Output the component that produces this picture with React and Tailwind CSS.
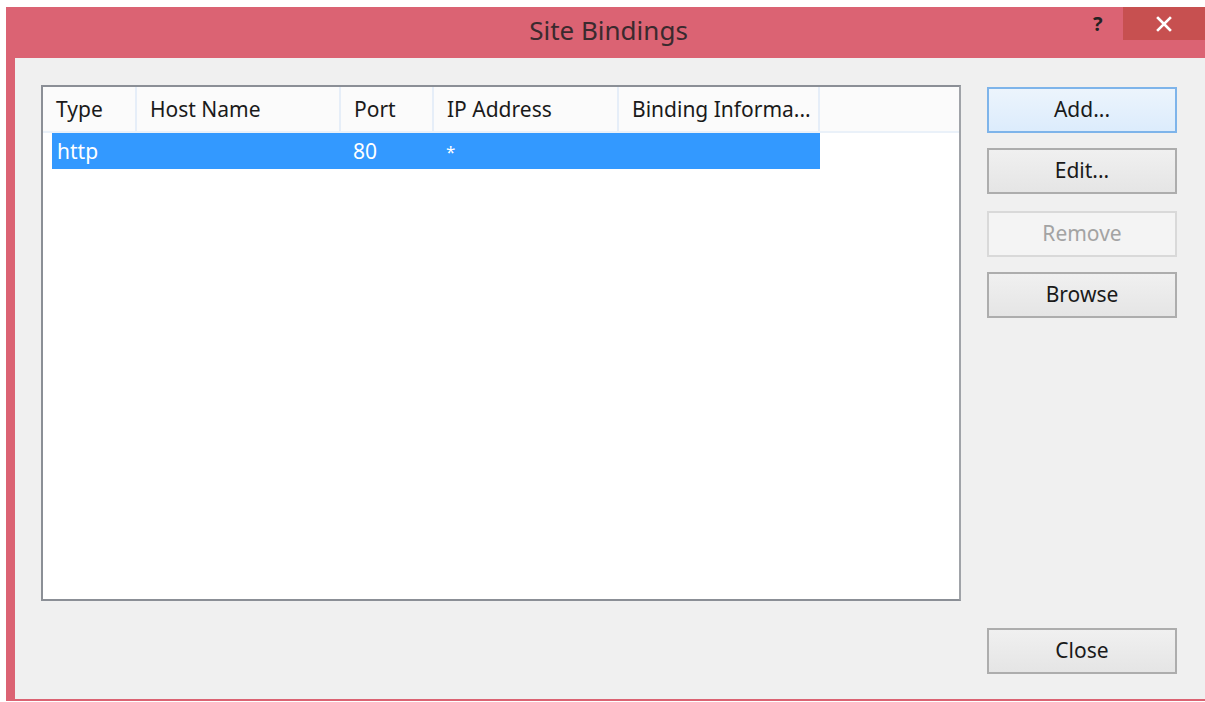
import React from "react";

const font = { fontFamily: '"Noto Sans", "Open Sans", sans-serif' };

const columns = [
  { label: "Type", w: "w-[94px]" },
  { label: "Host Name", w: "w-[204px]" },
  { label: "Port", w: "w-[93px]" },
  { label: "IP Address", w: "w-[185px]" },
  { label: "Binding Informa...", w: "w-[201px]" },
];

function DialogButton({ children, variant = "normal", className = "" }) {
  const styles = {
    normal: "border-[#adadad] bg-gradient-to-b from-[#f0f0f0] to-[#e5e5e5] text-[#1a1a1a]",
    focused: "border-[#7eb4ea] bg-gradient-to-b from-[#ecf4fc] to-[#dcecfc] text-[#1a1a1a]",
    disabled: "border-[#d9d9d9] bg-[#f4f4f4] text-[#a3a3a3]",
  };
  return (
    <div
      className={`flex h-[46px] w-[190px] items-center justify-center border-2 text-[21px] ${styles[variant]} ${className}`}
    >
      {children}
    </div>
  );
}

export default function App() {
  return (
    <div className="h-[702px] w-[1205px] overflow-hidden bg-white pl-[6px] pt-[7px]" style={font}>
      <div className="flex h-[694px] flex-col bg-[#db6373]">
        {/* title bar */}
        <div className="relative flex h-[51px] shrink-0 items-center justify-center pb-[4px]">
          <span className="ml-[6px] text-[26px] text-[#3a2a2e]">Site Bindings</span>
          <span className="absolute left-[1087px] top-[2px] text-[20px] font-bold text-[#222]">?</span>
          <div className="absolute right-0 top-0 flex h-[33px] w-[82px] items-center justify-center bg-[#c75050]">
            <svg width="16" height="16" viewBox="0 0 16 16">
              <path d="M2 2 L14 14 M14 2 L2 14" stroke="white" strokeWidth="2.6" strokeLinecap="square" />
            </svg>
          </div>
        </div>

        {/* client area */}
        <div className="ml-[9px] mb-[2px] flex flex-1 bg-[#f0f0f0] pl-[26px] pt-[27px] pb-[25px]">
          {/* bindings list */}
          <div className="h-[516px] w-[920px] border-2 border-[#8b8f96] border-r-[#a0a3a8] bg-white">
            <div className="flex h-[46px] border-b-2 border-[#eaf1f9] bg-[#fbfbfb]">
              {columns.map((c) => (
                <div
                  key={c.label}
                  className={`flex ${c.w} items-center border-r-2 border-[#e6eef8] pl-[13px] pt-[2px] text-[21px] text-[#1a1a1a]`}
                >
                  {c.label}
                </div>
              ))}
            </div>
            <div className="ml-[9px] flex h-[36px] w-[768px] items-center bg-[#3399ff] pt-[2px] text-[21px] text-white">
              <div className="w-[301px] pl-[5px]">http</div>
              <div className="w-[93px]">80</div>
              <div className="text-[17px]">*</div>
            </div>
          </div>

          {/* action buttons */}
          <div className="ml-[26px] flex flex-col pt-[2px]">
            <DialogButton variant="focused">Add...</DialogButton>
            <DialogButton className="mt-[15px]">Edit...</DialogButton>
            <DialogButton variant="disabled" className="mt-[17px]">Remove</DialogButton>
            <DialogButton className="mt-[15px]">Browse</DialogButton>
            <DialogButton className="mt-auto">Close</DialogButton>
          </div>
        </div>
      </div>
    </div>
  );
}
